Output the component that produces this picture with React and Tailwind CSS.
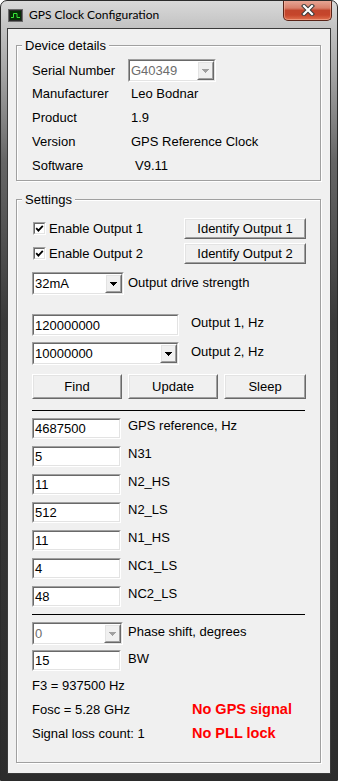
import React from "react";

const sans = "font-['Liberation_Sans',Arial,sans-serif]";

// classic 3D sunken edge (edit boxes, combos, checkboxes)
const Sunken = ({ className = "", inner = "bg-white", children }) => (
  <div
    className={`border border-t-[#a0a0a0] border-l-[#a0a0a0] border-r-white border-b-white ${className}`}
  >
    <div
      className={`flex h-full w-full items-center border border-t-[#696969] border-l-[#696969] border-r-[#e3e3e3] border-b-[#e3e3e3] ${inner}`}
    >
      {children}
    </div>
  </div>
);

// classic 3D raised edge (push buttons)
const Raised = ({ className = "", children }) => (
  <div
    className={`border border-t-white border-l-white border-r-[#696969] border-b-[#696969] ${className}`}
  >
    <div className="flex h-full w-full items-center justify-center border border-t-[#e3e3e3] border-l-[#e3e3e3] border-r-[#a0a0a0] border-b-[#a0a0a0] bg-[#f0f0f0]">
      {children}
    </div>
  </div>
);

const Arrow = ({ color = "#000" }) => (
  <svg width="7" height="4" viewBox="0 0 7 4" shapeRendering="crispEdges">
    <polygon points="0,0 7,0 3.5,4" fill={color} />
  </svg>
);

const Combo = ({ value, className, disabled }) => (
  <Sunken className={className}>
    <span className={`flex-1 pl-[1px] leading-[17px] ${disabled ? "text-[#6d6d6d]" : ""}`}>
      {value}
    </span>
    <Raised className="h-full w-[17px]">
      <Arrow color={disabled ? "#a0a0a0" : "#000"} />
    </Raised>
  </Sunken>
);

const Edit = ({ value, className }) => (
  <Sunken className={className}>
    <span className="pl-[1px] leading-[17px]">{value}</span>
  </Sunken>
);

const Check = () => (
  <Sunken className="ml-[1px] h-[13px] w-[13px]">
    <svg width="9" height="9" viewBox="0 0 9 9">
      <polyline points="1.2,4.2 3.4,6.6 7.8,1.8" fill="none" stroke="#000" strokeWidth="1.8" />
    </svg>
  </Sunken>
);

const Button = ({ className, children }) => (
  <Raised className={className}>
    <span className="leading-[16px]">{children}</span>
  </Raised>
);

const AppIcon = () => (
  <svg width="15" height="13" viewBox="0 0 15 13" className="mt-[8px]">
    <rect x="0.5" y="0.5" width="14" height="12" fill="#2a2a2a" stroke="#6a6a6a" />
    <rect x="2" y="2" width="11" height="9" fill="#063006" />
    <path d="M3 8.5H5.5V4.5H9V8.5H12" fill="none" stroke="#39e639" strokeWidth="1" />
  </svg>
);

const CloseButton = () => (
  <div className="-mt-[1px] ml-auto mr-[5px] flex h-[21px] w-[49px] items-center justify-center rounded-b-[5px] border border-t-0 border-[#5a2418] bg-[linear-gradient(to_bottom,#e8aa9a_0%,#d9806b_40%,#c2452c_52%,#c6452b_75%,#e0714f_100%)] shadow-[inset_0_0_0_1px_rgba(255,200,180,0.45)]">
    <svg width="14" height="12" viewBox="0 0 14 12">
      <path d="M3 2L11 10M11 2L3 10" stroke="#3b3b3b" strokeWidth="4.2" strokeLinecap="square" />
      <path d="M3 2L11 10M11 2L3 10" stroke="#fff" strokeWidth="2.2" strokeLinecap="square" />
    </svg>
  </div>
);

const Group = ({ title, className, children }) => (
  <fieldset
    className={`ml-[8px] w-[305px] border border-[#a0a0a0] shadow-[1px_1px_0_#fff,inset_1px_1px_0_#fff] ${className}`}
  >
    <legend className="ml-[5px] bg-[#f0f0f0] px-[3px] leading-[15px]">{title}</legend>
    {children}
  </fieldset>
);

const deviceRows = [
  ["Manufacturer", "Leo Bodnar", "pl-[3px]"],
  ["Product", "1.9", "pl-[3px]"],
  ["Version", "GPS Reference Clock", "pl-[3px]"],
  ["Software", "V9.11", "pl-[7px]"],
];

const pllRows = [
  ["4687500", "GPS reference, Hz"],
  ["5", "N31"],
  ["11", "N2_HS"],
  ["512", "N2_LS"],
  ["11", "N1_HS"],
  ["4", "NC1_LS"],
  ["48", "NC2_LS"],
];

export default function App() {
  return (
    <div
      className={`flex h-[781px] w-[338px] flex-col overflow-hidden rounded-t-[7px] border border-[#2b2b2b] bg-[linear-gradient(to_bottom,#d9d9d9_0px,#c3c3c3_26px,#a6a6a6_70px,#666_160px,#3a3a3a_320px,#2c2c2c_100%)] text-[13px] text-black ${sans}`}
    >
      {/* title bar */}
      <div className="flex h-[27px] shrink-0 items-start pl-[7px]">
        <AppIcon />
        <span className="ml-[6px] mt-[6px] font-['Lato',sans-serif] text-[12px] leading-[16px]">
          GPS Clock Configuration
        </span>
        <CloseButton />
      </div>

      {/* client area */}
      <div className="mx-[6px] h-[746px] shrink-0 border border-[#3a3a3a] bg-[#f0f0f0]">
        <Group title="Device details" className="mt-[9px] h-[143px]">
          <div className="pl-[15px] pt-[6px]">
            <div className="flex h-[23px] items-center">
              <span className="w-[96px]">Serial Number</span>
              <Combo value="G40349" className="h-[23px] w-[88px]" disabled />
            </div>
            {deviceRows.map(([k, v, pad]) => (
              <div key={k} className="flex h-[24px] items-center">
                <span className="w-[96px]">{k}</span>
                <span className={pad}>{v}</span>
              </div>
            ))}
          </div>
        </Group>

        <Group title="Settings" className="mt-[11px] h-[571px]">
          <div className="pl-[15px] pr-[14px] pt-[11px]">
            <div className="flex h-[21px] items-center">
              <Check />
              <span className="ml-[3px]">Enable Output 1</span>
              <Button className="ml-auto h-[21px] w-[122px]">Identify Output 1</Button>
            </div>
            <div className="mt-[4px] flex h-[21px] items-center">
              <Check />
              <span className="ml-[3px]">Enable Output 2</span>
              <Button className="ml-auto h-[21px] w-[122px]">Identify Output 2</Button>
            </div>

            <div className="mt-[8px] flex items-start">
              <Combo value="32mA" className="h-[23px] w-[92px]" />
              <span className="ml-[4px] mt-[3px] leading-[16px]">Output drive strength</span>
            </div>

            <div className="mt-[19px] flex items-start">
              <Edit value="120000000" className="h-[22px] w-[147px]" />
              <span className="ml-[12px] mt-[1px] leading-[16px]">Output 1, Hz</span>
            </div>
            <div className="mt-[6px] flex items-start">
              <Combo value="10000000" className="h-[23px] w-[147px]" />
              <span className="ml-[12px] mt-[2px] leading-[16px]">Output 2, Hz</span>
            </div>

            <div className="mt-[9px] flex">
              <Button className="h-[25px] w-[90px]">Find</Button>
              <Button className="ml-[6px] h-[25px] w-[90px]">Update</Button>
              <Button className="ml-[6px] h-[25px] flex-1">Sleep</Button>
            </div>

            <div className="mr-[1px] mt-[11px] h-[1px] bg-black" />

            <div className="mt-[7px] flex flex-col gap-[7px]">
              {pllRows.map(([v, k]) => (
                <div key={k} className="flex items-start">
                  <Edit value={v} className="h-[21px] w-[89px]" />
                  <span className="ml-[7px] leading-[16px]">{k}</span>
                </div>
              ))}
            </div>

            <div className="mr-[1px] mt-[7px] h-[1px] bg-black" />

            <div className="mt-[7px] flex items-start">
              <Combo value="0" className="h-[23px] w-[91px]" disabled />
              <span className="ml-[5px] mt-[2px] leading-[16px]">Phase shift, degrees</span>
            </div>
            <div className="mt-[5px] flex items-start">
              <Edit value="15" className="h-[21px] w-[89px]" />
              <span className="ml-[7px] mt-[1px] leading-[16px]">BW</span>
            </div>

            <div className="mt-[3px]">
              <div className="flex h-[24px] items-center">F3 = 937500 Hz</div>
              <div className="flex h-[24px] items-center">
                <span className="w-[160px]">Fosc = 5.28 GHz</span>
                <span className="text-[14.5px] font-bold text-[#ff0000]">No GPS signal</span>
              </div>
              <div className="flex h-[24px] items-center">
                <span className="w-[160px]">Signal loss count: 1</span>
                <span className="text-[14.5px] font-bold text-[#ff0000]">No PLL lock</span>
              </div>
            </div>
          </div>
        </Group>
      </div>
    </div>
  );
}
